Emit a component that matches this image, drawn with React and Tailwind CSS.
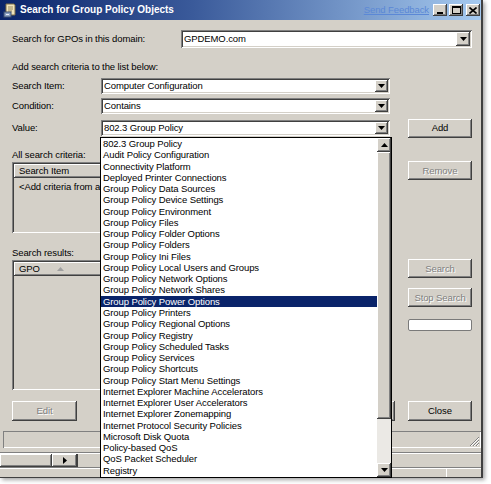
import React from "react";

const RAISED = "shadow-[inset_-1px_-1px_#404040,inset_1px_1px_#ffffff,inset_-2px_-2px_#808080]";
const SUNKEN = "shadow-[inset_1px_1px_#808080,inset_-1px_-1px_#ffffff,inset_2px_2px_#404040,inset_-2px_-2px_#d4d0c8]";

const items = [
  "802.3 Group Policy",
  "Audit Policy Configuration",
  "Connectivity Platform",
  "Deployed Printer Connections",
  "Group Policy Data Sources",
  "Group Policy Device Settings",
  "Group Policy Environment",
  "Group Policy Files",
  "Group Policy Folder Options",
  "Group Policy Folders",
  "Group Policy Ini Files",
  "Group Policy Local Users and Groups",
  "Group Policy Network Options",
  "Group Policy Network Shares",
  "Group Policy Power Options",
  "Group Policy Printers",
  "Group Policy Regional Options",
  "Group Policy Registry",
  "Group Policy Scheduled Tasks",
  "Group Policy Services",
  "Group Policy Shortcuts",
  "Group Policy Start Menu Settings",
  "Internet Explorer Machine Accelerators",
  "Internet Explorer User Accelerators",
  "Internet Explorer Zonemapping",
  "Internet Protocol Security Policies",
  "Microsoft Disk Quota",
  "Policy-based QoS",
  "QoS Packet Scheduler",
  "Registry",
];

function Tri({ dir = "down", color = "#000" }) {
  const d = {
    down: "M0 0h7L3.5 4z",
    up: "M0 4h7L3.5 0z",
  }[dir];
  return (
    <svg width="7" height="4" viewBox="0 0 7 4">
      <path d={d} fill={color} />
    </svg>
  );
}

function ArrowBtn({ className, dir = "down" }) {
  return (
    <div className={`bg-[#d4d0c8] flex items-center justify-center ${RAISED} ${className}`}>
      <Tri dir={dir} />
    </div>
  );
}

function Combo({ text, className, btnClass }) {
  return (
    <div className={`bg-white flex items-center pl-[3px] pr-[2px] ${SUNKEN} ${className}`}>
      <span className="flex-1 whitespace-nowrap overflow-hidden">{text}</span>
      <ArrowBtn className={btnClass} />
    </div>
  );
}

function Btn({ children, disabled, className }) {
  return (
    <div
      className={`flex items-center justify-center bg-[#d4d0c8] ${RAISED} ${
        disabled ? "text-[#808080] [text-shadow:1px_1px_0_#ffffff]" : "text-black"
      } ${className}`}
    >
      {children}
    </div>
  );
}

function TitleIcon() {
  return (
    <svg width="14" height="15" viewBox="0 0 14 15">
      <path d="M3 1h8l1 1v10H3z" fill="#efe4bd" stroke="#7d6d45" strokeWidth="1" />
      <path d="M5 4h5M5 6h5M5 8h4" stroke="#9a8a60" strokeWidth="1" />
      <rect x="1" y="9" width="7" height="5" fill="#8aa0c0" stroke="#3d4f70" strokeWidth="1" />
      <rect x="3" y="11" width="3" height="1" fill="#e8eef8" />
    </svg>
  );
}

export default function App() {
  return (
    <div className="w-[491px] h-[484px] bg-white relative overflow-hidden font-['Liberation_Sans',Arial,sans-serif] text-[9.5px] tracking-[-0.1px] leading-[12px] text-black">
      <div className="w-[483px] h-[478px] bg-[#d4d0c8] border-r-2 border-b border-[#404040] shadow-[2px_2px_4px_rgba(0,0,0,0.35)] flex flex-col">
        {/* Title bar */}
        <div className="h-[20px] shrink-0 flex items-center bg-[linear-gradient(to_right,#0a246a,#3a5a9a_40%,#a6caf0)]">
          <div className="ml-[3px] mt-[1px]">
            <TitleIcon />
          </div>
          <span className="ml-[3px] text-white font-bold text-[10px] tracking-normal">
            Search for Group Policy Objects
          </span>
          <div className="flex-1" />
          <span className="underline text-[#5b88d6] mr-[4px]">Send Feedback</span>
          <div className="flex items-center mr-[1px]">
            <div className={`w-[14px] h-[12px] bg-[#d4d0c8] ${RAISED} flex items-end justify-center pb-[2px]`}>
              <div className="w-[6px] h-[2px] bg-black" />
            </div>
            <div className={`ml-[2px] w-[14px] h-[12px] bg-[#d4d0c8] ${RAISED} flex items-center justify-center`}>
              <div className="w-[9px] h-[8px] border border-black border-t-2" />
            </div>
            <div className={`ml-[3px] w-[14px] h-[12px] bg-[#d4d0c8] ${RAISED} flex items-center justify-center`}>
              <svg width="8" height="7" viewBox="0 0 8 7">
                <path d="M0.5 0.5l7 6M7.5 0.5l-7 6" stroke="#000" strokeWidth="1.6" />
              </svg>
            </div>
          </div>
        </div>

        {/* Domain row */}
        <div className="mt-[10px] h-[18px] flex items-center pl-[12px]">
          <span className="w-[169px]">Search for GPOs in this domain:</span>
          <Combo
            text="GPDEMO.com"
            className="w-[291px] h-[18px]"
            btnClass="w-[14px] h-[14px]"
          />
        </div>

        <div className="mt-[13px] h-[12px] pl-[12px]">Add search criteria to the list below:</div>

        <div className="mt-[5px] h-[16px] flex items-center pl-[12px]">
          <span className="w-[89px]">Search Item:</span>
          <Combo text="Computer Configuration" className="w-[289px] h-[16px]" btnClass="w-[13px] h-[12px]" />
        </div>
        <div className="mt-[4px] h-[16px] flex items-center pl-[12px]">
          <span className="w-[89px]">Condition:</span>
          <Combo text="Contains" className="w-[289px] h-[16px]" btnClass="w-[13px] h-[12px]" />
        </div>
        <div className="mt-[6px] h-[16px] flex items-center pl-[12px]">
          <span className="w-[89px]">Value:</span>
          <Combo text="802.3 Group Policy" className="w-[289px] h-[16px]" btnClass="w-[13px] h-[12px]" />
          <Btn className="ml-[18px] w-[64px] h-[19px] shrink-0">Add</Btn>
        </div>

        {/* Middle */}
        <div className="mt-[13px] flex pl-[12px]">
          <div className="w-[379px] flex flex-col">
            <div className="h-[12px]">All search criteria:</div>
            <div className={`mt-[1px] h-[71px] bg-[#d4d0c8] p-[2px] ${SUNKEN}`}>
              <div className={`h-[14px] bg-[#d4d0c8] ${RAISED} pl-[5px] flex items-center`}>Search Item</div>
              <div className="w-[86px] pl-[5px] mt-[3px] whitespace-nowrap overflow-hidden">&lt;Add criteria from above&gt;</div>
            </div>
            <div className="mt-[14px] h-[12px]">Search results:</div>
            <div className={`mt-[1px] h-[130px] bg-[#d4d0c8] p-[2px] ${SUNKEN}`}>
              <div className={`h-[14px] bg-[#d4d0c8] ${RAISED} pl-[5px] flex items-center`}>
                <span>GPO</span>
                <span className="ml-[17px]">
                  <Tri dir="up" color="#a0a0a0" />
                </span>
              </div>
            </div>
          </div>
          <div className="ml-[17px] w-[64px] flex flex-col">
            <Btn disabled className="mt-[12px] h-[19px]">Remove</Btn>
            <Btn disabled className="mt-[79px] h-[19px]">Search</Btn>
            <Btn disabled className="mt-[10px] h-[19px]">Stop Search</Btn>
            <div className="mt-[12px] h-[12px] bg-white border border-[#7a7a7a] rounded-[2px]" />
          </div>
        </div>

        {/* Bottom buttons */}
        <div className="mt-[11px] h-[20px] flex pl-[12px]">
          <Btn disabled className="w-[65px] h-[20px]">Edit</Btn>
          <Btn className="ml-[253px] w-[65px] h-[20px]">Open</Btn>
          <Btn className="ml-[13px] w-[64px] h-[20px]">Close</Btn>
        </div>

        {/* Status bar */}
        <div className="mt-[10px] h-[17px] ml-[3px] w-[478px] shadow-[inset_1px_1px_#808080,inset_-1px_-1px_#ffffff] flex justify-end items-end">
          <svg width="11" height="11" viewBox="0 0 11 11" className="mb-[1px] mr-[1px]">
            <path d="M10 1L1 10M10 4L4 10M10 7L7 10" stroke="#808080" strokeWidth="1" />
            <path d="M10 2L2 10M10 5L5 10M10 8L8 10" stroke="#ffffff" strokeWidth="1" />
          </svg>
        </div>

        {/* Lower frame area */}
        <div className="mt-[4px] h-px bg-[#808080]" />
        <div className="h-px bg-white" />
        <div className="h-[13px] flex">
          <div className={`w-[52px] bg-[#d4d0c8] ${RAISED}`} />
          <div className={`w-[25px] bg-[#d4d0c8] ${RAISED} flex items-center justify-center`}>
            <svg width="4" height="7" viewBox="0 0 4 7">
              <path d="M0 0v7l4-3.5z" fill="#000" />
            </svg>
          </div>
          <div className="w-px bg-[#404040]" />
          <div className="flex-1" />
        </div>
        <div className="h-px bg-[#808080]" />
        <div className="h-px bg-white" />
        <div className="flex-1 flex">
          <div className="ml-[446px] w-px bg-white" />
        </div>
      </div>

      {/* Open dropdown list */}
      <div className="absolute left-[100px] top-[137px] w-[292px] h-[341px] border border-black bg-white flex z-10">
        <div className="w-[276px] flex flex-col">
          {items.map((t, i) => (
            <div
              key={t}
              className={`h-[11.28px] leading-[11.28px] pl-[2px] whitespace-nowrap overflow-hidden ${
                i === 14 ? "bg-[#0a246a] text-white" : ""
              }`}
            >
              {t}
            </div>
          ))}
        </div>
        <div className="w-[14px] flex flex-col">
          <ArrowBtn dir="up" className="h-[14px] shrink-0" />
          <div className={`h-[267px] shrink-0 bg-[#d4d0c8] ${RAISED}`} />
          <div className="flex-1 bg-[#ebe9e5]" />
          <ArrowBtn dir="down" className="h-[14px] shrink-0" />
        </div>
      </div>
    </div>
  );
}
